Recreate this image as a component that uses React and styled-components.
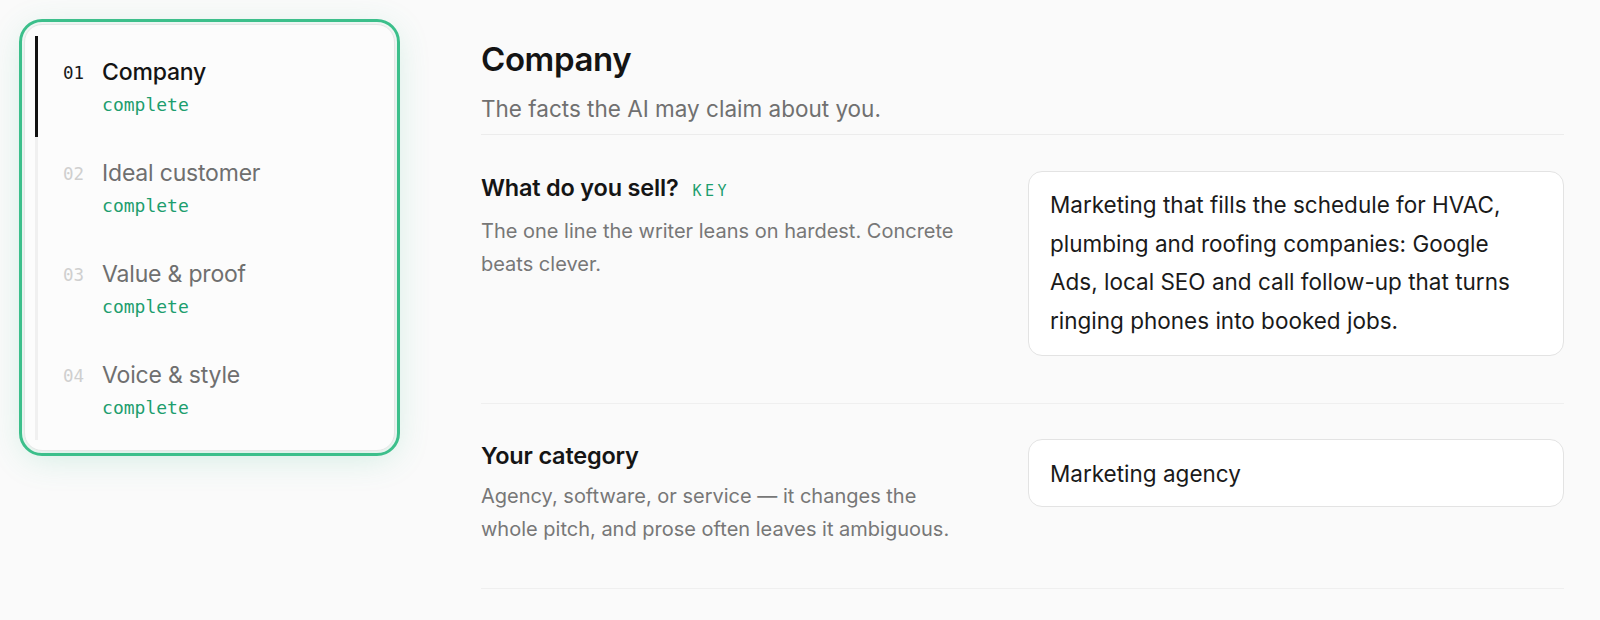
import React from "react";
import styled, { createGlobalStyle } from "styled-components";

const Global = createGlobalStyle`
  html, body { margin: 0; padding: 0; background: #fafafa; }
  body { font-family: Inter, "Noto Sans", sans-serif; color: #161616; -webkit-font-smoothing: antialiased; }
  * { box-sizing: border-box; }
`;

const Page = styled.div`
  display: flex;
  align-items: flex-start;
  gap: 86px;
  padding: 24px 36px 24px 24px;
  min-height: 620px;
`;

const NavCard = styled.nav`
  flex: 0 0 371px;
  background: #fcfcfc;
  border: 1px solid #e6e6e6;
  border-radius: 18px;
  outline: 3px solid #3cbf8b;
  outline-offset: 2px;
  box-shadow: 0 6px 34px rgba(60, 191, 139, 0.22);
  padding: 11px 0 10px 10px;
`;

const NavList = styled.ol`
  list-style: none;
  margin: 0;
  padding: 0;
`;

const NavItem = styled.li`
  display: grid;
  grid-template-columns: auto 1fr;
  grid-template-rows: 30px 24px;
  align-content: start;
  align-items: center;
  column-gap: 18px;
  row-gap: 6px;
  height: 101px;
  padding: 21px 0 0 25px;
  border-left: 3px solid ${(p) => (p.$active ? "#111111" : "#f0f0f0")};
`;

const NavNum = styled.span`
  font-family: "DejaVu Sans Mono", monospace;
  font-size: 17.5px;
  line-height: 30px;
  padding-top: 2px;
  color: ${(p) => (p.$active ? "#1a1a1a" : "#cfcfcf")};
`;

const NavTitle = styled.span`
  font-size: 23px;
  line-height: 30px;
  font-weight: ${(p) => (p.$active ? 500 : 400)};
  letter-spacing: -0.2px;
  color: ${(p) => (p.$active ? "#141414" : "#6f6f6f")};
`;

const NavStatus = styled.span`
  grid-column: 2;
  font-family: "DejaVu Sans Mono", monospace;
  font-size: 18px;
  line-height: 24px;
  color: #1d9e6e;
`;

const Main = styled.main`
  flex: 1;
  min-width: 0;
  padding-top: 15px;
`;

const Header = styled.header`
  padding-bottom: 10px;
  border-bottom: 1px solid #ececec;
`;

const Title = styled.h1`
  margin: 0;
  font-size: 33px;
  line-height: 40px;
  font-weight: 600;
  letter-spacing: -0.4px;
  color: #141414;
`;

const Subtitle = styled.p`
  margin: 15px 0 0;
  font-size: 22.5px;
  line-height: 30px;
  color: #707070;
`;

const FieldRow = styled.section`
  display: grid;
  grid-template-columns: minmax(0, 1fr) 536px;
  column-gap: 48px;
  align-items: start;
  padding: ${(p) => (p.$first ? "36px" : "35px")} 0 43px;
  border-bottom: 1px solid #efefef;
`;

const FieldInfo = styled.div`
  max-width: 490px;
  padding-top: 2px;
`;

const Label = styled.h2`
  display: flex;
  align-items: baseline;
  gap: 14px;
  margin: 0;
  font-size: 23.5px;
  line-height: 30px;
  font-weight: 600;
  letter-spacing: -0.2px;
  color: #151515;
`;

const KeyTag = styled.span`
  font-family: "DejaVu Sans Mono", monospace;
  font-size: 15px;
  font-weight: 400;
  letter-spacing: 3.5px;
  color: #1d9e6e;
`;

const Help = styled.p`
  margin: 9px 0 0;
  font-size: 20px;
  line-height: 32.6px;
  color: #777777;
`;

const boxCss = `
  display: block;
  width: 100%;
  margin: 0;
  padding: 14px 21px;
  border: 1px solid #e3e3e3;
  border-radius: 14px;
  background: #ffffff;
  font-family: Inter, "Noto Sans", sans-serif;
  font-size: 22.5px;
  line-height: 38.5px;
  color: #1a1a1a;
  outline: none;
`;

const TextArea = styled.textarea`
  ${boxCss}
  height: 185px;
  margin-bottom: 4px;
  resize: none;
  overflow: hidden;
`;

const TextInput = styled.input`
  ${boxCss}
  height: 68px;
`;

const steps = [
  { n: "01", title: "Company", active: true },
  { n: "02", title: "Ideal customer" },
  { n: "03", title: "Value & proof" },
  { n: "04", title: "Voice & style" },
];

export default function App() {
  return (
    <>
      <Global />
      <Page>
        <NavCard>
          <NavList>
            {steps.map((s) => (
              <NavItem key={s.n} $active={s.active}>
                <NavNum $active={s.active}>{s.n}</NavNum>
                <NavTitle $active={s.active}>{s.title}</NavTitle>
                <NavStatus>complete</NavStatus>
              </NavItem>
            ))}
          </NavList>
        </NavCard>
        <Main>
          <Header>
            <Title>Company</Title>
            <Subtitle>The facts the AI may claim about you.</Subtitle>
          </Header>
          <FieldRow $first>
            <FieldInfo>
              <Label>
                What do you sell? <KeyTag>KEY</KeyTag>
              </Label>
              <Help>The one line the writer leans on hardest. Concrete beats clever.</Help>
            </FieldInfo>
            <TextArea
              readOnly
              defaultValue="Marketing that fills the schedule for HVAC, plumbing and roofing companies: Google Ads, local SEO and call follow-up that turns ringing phones into booked jobs."
            />
          </FieldRow>
          <FieldRow>
            <FieldInfo>
              <Label>Your category</Label>
              <Help>
                Agency, software, or service — it changes the whole pitch, and prose often leaves it ambiguous.
              </Help>
            </FieldInfo>
            <TextInput readOnly defaultValue="Marketing agency" />
          </FieldRow>
        </Main>
      </Page>
    </>
  );
}
